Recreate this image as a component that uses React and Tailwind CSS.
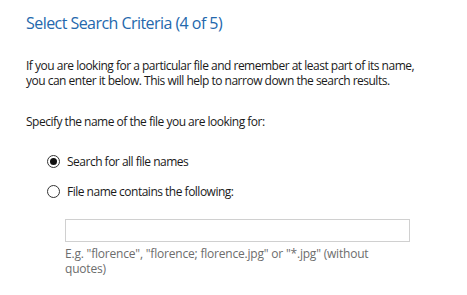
import React, { useState } from "react";

function Radio({ checked, label, onClick }) {
  return (
    <button onClick={onClick} className="flex items-center gap-[7px] h-[15px] text-left">
      <span className="w-[13px] h-[13px] rounded-full border border-[#333333] bg-white flex items-center justify-center">
        {checked && <span className="w-[7px] h-[7px] rounded-full bg-[#111111]" />}
      </span>
      <span>{label}</span>
    </button>
  );
}

export default function App() {
  const [mode, setMode] = useState("all");

  return (
    <div
      className="w-[467px] h-[295px] bg-white text-[#1a1a1a] text-[12px] leading-[15px] tracking-[-0.5px] pl-[26px] pt-[12px]"
      style={{ fontFamily: '"Open Sans", "Noto Sans", sans-serif' }}
    >
      <h1 className="text-[16px] leading-[22px] tracking-[-0.55px] text-[#2468ad]">
        Select Search Criteria (4 of 5)
      </h1>

      <p className="mt-[24px]">
        If you are looking for a particular file and remember at least part of its name,
        <br />
        you can enter it below. This will help to narrow down the search results.
      </p>

      <p className="mt-[26px]">Specify the name of the file you are looking for:</p>

      {/* radio options */}
      <div className="pl-[21px] mt-[25px] flex flex-col gap-[15px]">
        <Radio
          checked={mode === "all"}
          label="Search for all file names"
          onClick={() => setMode("all")}
        />
        <Radio
          checked={mode === "contains"}
          label="File name contains the following:"
          onClick={() => setMode("contains")}
        />
      </div>

      <div className="pl-[39px] mt-[20px] w-[384px]">
        <input
          type="text"
          className="w-[345px] h-[23px] border border-[#d0d0d0] bg-white px-[4px] outline-none"
        />
        <p className="mt-[4px] text-[#6d6d6d] tracking-[-0.2px]">
          E.g. "florence", "florence; florence.jpg" or "*.jpg" (without
          <br />
          quotes)
        </p>
      </div>
    </div>
  );
}
